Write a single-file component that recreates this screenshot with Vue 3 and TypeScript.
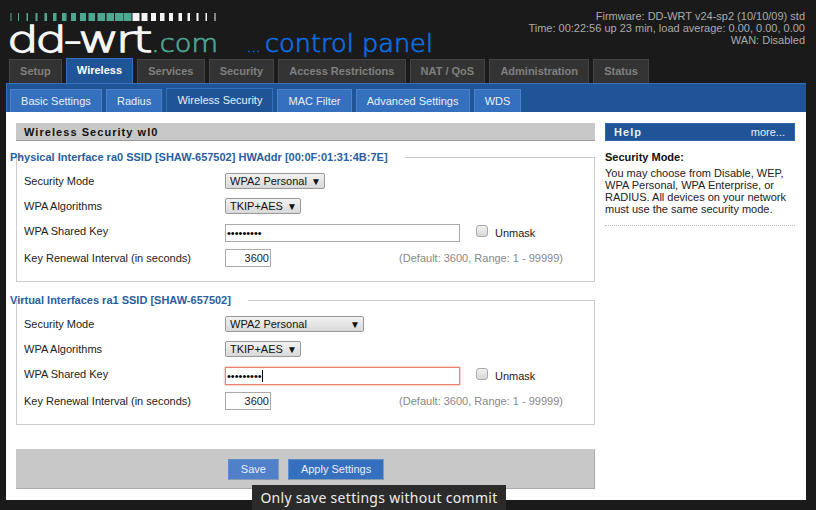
<script setup lang="ts">
const mainTabs = ['Setup', 'Wireless', 'Services', 'Security', 'Access Restrictions', 'NAT / QoS', 'Administration', 'Status'];
const subTabs = ['Basic Settings', 'Radius', 'Wireless Security', 'MAC Filter', 'Advanced Settings', 'WDS'];

// logo strip: [x, width] in logo pixels, teal up to the middle and white after
const tealBars = [[10.5, 1], [18, 1], [26.5, 1.5], [35.5, 2], [44.5, 2.5], [53, 3.5], [62, 4.5], [71, 5], [80, 6], [88.5, 6.5], [97.5, 7.5], [106.5, 7.5], [115, 8], [123.5, 8]];
const whiteBars = [[132.5, 7], [141.5, 6], [151, 5], [160, 4.5], [169, 4], [178.5, 3.5], [187.5, 2.5], [196.5, 2], [205.5, 1.5], [214.5, 1]];

interface Iface {
    legend: string;
    modeClass: string;
    focused: boolean;
}

const ifaces: Iface[] = [
    { legend: 'Physical Interface ra0 SSID [SHAW-657502] HWAddr [00:0F:01:31:4B:7E]', modeClass: 'mode-short', focused: false },
    { legend: 'Virtual Interfaces ra1 SSID [SHAW-657502]', modeClass: 'mode-wide', focused: true },
];
</script>

<template>
    <div class="page">
        <header class="header">
            <svg class="logo" width="440" height="58" viewBox="0 0 440 58">
                <rect v-for="b in tealBars" :key="b[0]" :x="b[0]" y="13" :width="b[1]" height="8" fill="#4da892" />
                <rect v-for="b in whiteBars" :key="b[0]" :x="b[0]" y="13" :width="b[1]" height="8" fill="#f4f4f4" />
                <text x="7" y="52" class="logo-main" textLength="142" lengthAdjust="spacingAndGlyphs">dd-wrt</text>
                <text x="151" y="52" class="logo-com" textLength="67" lengthAdjust="spacingAndGlyphs">.com</text>
                <text x="247" y="52" class="logo-dots">...</text>
                <text x="265" y="52" class="logo-panel" textLength="168" lengthAdjust="spacingAndGlyphs">control panel</text>
            </svg>
            <div class="info">
                <div>Firmware: DD-WRT v24-sp2 (10/10/09) std</div>
                <div>Time: 00:22:56 up 23 min, load average: 0.00, 0.00, 0.00</div>
                <div>WAN: Disabled</div>
            </div>
        </header>

        <nav class="main-tabs">
            <a v-for="tab in mainTabs" :key="tab" class="main-tab" :class="{ active: tab === 'Wireless' }">{{ tab }}</a>
        </nav>
        <nav class="sub-tabs">
            <a v-for="tab in subTabs" :key="tab" class="sub-tab" :class="{ active: tab === 'Wireless Security' }">{{ tab }}</a>
        </nav>

        <div class="content">
            <main class="main-col">
                <h2 class="title">Wireless Security wl0</h2>

                <fieldset v-for="iface in ifaces" :key="iface.legend" class="iface">
                    <legend>{{ iface.legend }}</legend>
                    <div class="row">
                        <label>Security Mode</label>
                        <div class="select" :class="iface.modeClass">WPA2 Personal<span class="arrow">▼</span></div>
                    </div>
                    <div class="row">
                        <label>WPA Algorithms</label>
                        <div class="select algo">TKIP+AES<span class="arrow">▼</span></div>
                    </div>
                    <div class="row key-row">
                        <label>WPA Shared Key</label>
                        <div class="key-wrap">
                            <input class="key" :class="{ focused: iface.focused }" type="password" value="123456789" />
                            <span v-if="iface.focused" class="caret"></span>
                        </div>
                        <span class="check"></span>
                        <span class="unmask">Unmask</span>
                    </div>
                    <div class="row renew-row">
                        <label>Key Renewal Interval (in seconds)</label>
                        <input class="renew" type="text" value="3600" />
                        <span class="hint">(Default: 3600, Range: 1 - 99999)</span>
                    </div>
                </fieldset>

                <div class="actions">
                    <button class="btn hover">Save</button>
                    <button class="btn">Apply Settings</button>
                </div>
            </main>

            <aside class="side">
                <div class="help-bar">
                    <h2>Help</h2>
                    <a>more...</a>
                </div>
                <div class="help-body">
                    <h3>Security Mode:</h3>
                    <p>You may choose from Disable, WEP, WPA Personal, WPA Enterprise, or RADIUS. All devices on your network must use the same security mode.</p>
                </div>
            </aside>
        </div>

        <div class="tooltip">Only save settings without commit</div>
    </div>
</template>

<style>
html,
body {
    margin: 0;
    background: #1a1a1a;
    overflow: hidden;
}
</style>

<style scoped>
.page {
    position: relative;
    width: 816px;
    height: 510px;
    box-sizing: border-box;
    padding: 0 10px 10px 6px;
    overflow: hidden;
    font-family: 'Liberation Sans', Arial, sans-serif;
    font-size: 11px;
    color: #222;
}

.header {
    height: 58px;
    display: flex;
    justify-content: space-between;
    margin-left: -6px;
}

.logo {
    display: block;
}

.logo text {
    font-family: 'DejaVu Sans', sans-serif;
    font-weight: 200;
}

.logo-main {
    fill: #f6f6f6;
    stroke: #f6f6f6;
    stroke-width: 1.3;
    font-size: 36px;
    letter-spacing: -2.5px;
}

.logo-com {
    fill: #4da892;
    stroke: #4da892;
    stroke-width: 0.7;
    font-size: 25px;
}

.logo-dots {
    fill: #0a6fe3;
    stroke: #0a6fe3;
    stroke-width: 0.6;
    font-size: 14px;
}

.logo-panel {
    fill: #0a6fe3;
    stroke: #0a6fe3;
    stroke-width: 0.7;
    font-size: 25px;
}

.info {
    padding-top: 10px;
    padding-right: 1px;
    text-align: right;
    line-height: 12px;
    color: #aaa;
}

.main-tabs {
    height: 25px;
    display: flex;
    align-items: flex-end;
    gap: 4px;
    padding-left: 3px;
}

.main-tab {
    height: 24px;
    line-height: 22px;
    box-sizing: border-box;
    padding: 0 10.1px;
    background: #333;
    border: 1px solid #444;
    border-bottom: 0;
    color: #808080;
    font-weight: bold;
}

.main-tab.active {
    height: 25px;
    line-height: 22px;
    background: #1f5596;
    border-color: #3470be;
    color: #fff;
}

.sub-tabs {
    height: 29px;
    box-sizing: border-box;
    display: flex;
    align-items: flex-end;
    gap: 4px;
    padding-left: 3px;
    background: #1f5596;
    border-top: 1px solid #3470be;
    border-left: 1px solid #3470be;
}

.sub-tab {
    height: 23px;
    line-height: 23px;
    box-sizing: border-box;
    padding: 0 10.1px;
    background: #3470be;
    border: 1px solid #4a83cc;
    border-bottom: 0;
    color: #e8eff8;
}

.sub-tab.active {
    height: 24px;
    line-height: 22px;
    background: #1f5596;
    border-color: #3470be;
}

.content {
    height: 388px;
    box-sizing: border-box;
    display: flex;
    gap: 10px;
    padding: 11px 11px 0 10px;
    background: #fff;
}

.main-col {
    width: 579px;
}

.title {
    margin: 0;
    height: 18px;
    line-height: 18px;
    box-sizing: border-box;
    padding-left: 8px;
    background: #c8c8c8;
    border-bottom: 1px solid #999;
    font-size: 11px;
    letter-spacing: 1.05px;
    color: #111;
}

.iface {
    margin: 10px 0 12px;
    padding: 5px 0 0 7px;
    height: 131px;
    box-sizing: border-box;
    border: 1px solid #ccc;
    min-width: 0;
}

/* legend hangs out to the left of its box */
.iface legend {
    position: relative;
    left: -14px;
    padding: 0 3px 0 0;
    line-height: 12px;
    font-weight: bold;
    color: #2a5e9e;
}

.row {
    height: 25px;
    display: flex;
    align-items: center;
}

.row label {
    width: 201px;
    flex: none;
}

.select {
    height: 16px;
    line-height: 15px;
    box-sizing: border-box;
    padding-left: 4px;
    display: flex;
    justify-content: space-between;
    background: linear-gradient(#f2f2f2, #d9d9d9);
    border: 1px solid #999;
    border-radius: 2px;
    color: #111;
}

.arrow {
    font-size: 10px;
    padding-right: 3px;
}

.mode-short {
    width: 100px;
}

.mode-wide {
    width: 139px;
}

.algo {
    width: 76px;
}

.key-row {
    height: 27px;
}

.key-row label {
    margin-bottom: 2px;
}

.key-wrap {
    position: relative;
    display: flex;
    margin-top: 2px;
}

.key {
    width: 235px;
    height: 18px;
    box-sizing: border-box;
    padding: 0 1px;
    border: 1px solid #aaa;
    font-family: 'Liberation Sans', Arial, sans-serif;
    font-size: 11px;
    outline: none;
}

.key.focused {
    border-color: #e9846f;
    box-shadow: 0 0 2px #e9846f;
}

.caret {
    position: absolute;
    left: 37px;
    top: 3px;
    width: 1px;
    height: 12px;
    background: #000;
}

.check {
    width: 12px;
    height: 12px;
    margin: -1px 7px 0 16px;
    box-sizing: border-box;
    border: 1px solid #aaa;
    border-radius: 3px;
    background: linear-gradient(#f0f0f0, #d8d8d8);
}

.unmask {
    padding-top: 2px;
}

.renew-row {
    justify-content: flex-start;
}

.renew {
    width: 46px;
    height: 18px;
    box-sizing: border-box;
    padding: 0 1px;
    border: 1px solid #aaa;
    text-align: right;
    font-family: 'Liberation Sans', Arial, sans-serif;
    font-size: 11px;
    color: #222;
    outline: none;
}

.hint {
    margin-left: auto;
    margin-right: 31px;
    color: #888;
}

.actions {
    height: 40px;
    box-sizing: border-box;
    display: flex;
    justify-content: center;
    align-items: center;
    gap: 9px;
    margin-top: 24px;
    padding-left: 1px;
    background: #c8c8c8;
    border: 1px solid #c8c8c8;
    border-right-color: #aaa;
    border-bottom-color: #aaa;
}

.btn {
    height: 21px;
    padding: 0 12px;
    background: #3470be;
    border: 1px solid #999;
    border-color: #5c8bcc #8a9bb0 #8a9bb0 #5c8bcc;
    color: #e8eff8;
    font-family: 'Liberation Sans', Arial, sans-serif;
    font-size: 11px;
}

.btn.hover {
    background: #4f80c8;
}

.side {
    width: 190px;
}

.help-bar {
    height: 18px;
    box-sizing: border-box;
    padding: 0 9px 0 8px;
    display: flex;
    justify-content: space-between;
    align-items: center;
    background: #1f5596;
    border: 1px solid #2e67b0;
    color: #e8eff8;
}

.help-bar h2 {
    margin: 0;
    font-size: 11px;
    letter-spacing: 1.05px;
    color: #e8eff8;
}

.help-body {
    padding: 10px 0 9px;
    border-bottom: 1px dotted #bbb;
}

.help-body h3 {
    margin: 0 0 4px;
    line-height: 12px;
    font-size: 11px;
    color: #111;
}

.help-body p {
    margin: 0;
    padding-bottom: 1px;
    line-height: 12px;
    color: #222;
}

.tooltip {
    position: absolute;
    left: 252px;
    top: 485px;
    width: 254px;
    height: 25px;
    line-height: 26px;
    text-align: center;
    background: #2b2b2b;
    color: #eee;
    font-family: 'Noto Sans', sans-serif;
    font-size: 14px;
    letter-spacing: 0.3px;
}
</style>
